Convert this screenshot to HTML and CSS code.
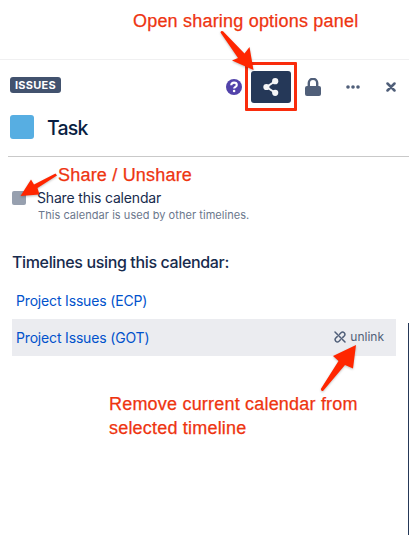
FILE: index.html
```
<!DOCTYPE html>
<html lang="en">
<head>
<meta charset="utf-8">
<title>Task calendar</title>
<link rel="stylesheet" href="styles.css">
</head>
<body>
<main class="panel">
  <header class="toolbar">
    <span class="badge">ISSUES</span>
    <div class="actions">
      <svg class="help" width="16" height="16" viewBox="0 0 16 16"><circle cx="8" cy="8" r="8" fill="#5243aa"/><path d="M5.2 6.2C5.2 4.5 6.4 3.6 8 3.6s2.8.9 2.8 2.4c0 1.8-2.7 1.8-2.7 3.6" fill="none" stroke="#fff" stroke-width="2.1"/><circle cx="8.1" cy="12" r="1.3" fill="#fff"/></svg>
      <button class="share" aria-label="Share"><svg width="18" height="20" viewBox="0 0 18 20"><path d="M13.5 4 4.5 10l9 6" fill="none" stroke="#f4f5f7" stroke-width="2"/><circle cx="13.2" cy="4.2" r="3.1" fill="#f4f5f7"/><circle cx="4.4" cy="10" r="3.1" fill="#f4f5f7"/><circle cx="13.2" cy="15.8" r="3.1" fill="#f4f5f7"/></svg></button>
      <svg class="lock" width="16" height="18" viewBox="0 0 16 18"><path d="M3.8 9V5a4.2 4.2 0 0 1 8.4 0v4" fill="none" stroke="#505f79" stroke-width="2.4"/><rect y="8" width="16" height="10" rx="2" fill="#505f79"/></svg>
      <svg class="more" width="14" height="4" viewBox="0 0 14 4" fill="#505f79"><circle cx="2" cy="2" r="1.8"/><circle cx="7" cy="2" r="1.8"/><circle cx="12" cy="2" r="1.8"/></svg>
      <svg class="close" width="10" height="10" viewBox="0 0 10 10"><path d="m1.5 1.5 7 7m0-7-7 7" stroke="#505f79" stroke-width="2.5" stroke-linecap="round"/></svg>
    </div>
  </header>
  <div class="heading"><span class="swatch"></span><h1>Task</h1></div>
  <section class="sharing">
    <span class="checkbox"></span>
    <div><div class="label">Share this calendar</div><div class="hint">This calendar is used by other timelines.</div></div>
  </section>
  <h2><span>Timelines using this calendar:</span></h2>
  <div class="row"><a>Project Issues (ECP)</a></div>
  <div class="row active"><a>Project Issues (GOT)</a>
    <span class="unlink"><svg width="12" height="12" viewBox="0 0 12 12" fill="none" stroke="#505f79" stroke-width="1.5" stroke-linecap="round"><path d="M1 1 11 11"/><path d="M5.6 3.2 7 1.8c2.2-2 5.2 1 3.2 3.2L8.8 6.4M6.4 8.8 5 10.2c-2.2 2-5.2-1-3.2-3.2l1.4-1.4"/></svg><span class="unlink-text">unlink</span></span>
  </div>
</main>
<div class="backdrop-edge"></div>
<div class="outline"></div>
<div class="note note-open"><span>Open sharing options panel</span></div>
<div class="note note-share"><span>Share / Unshare</span></div>
<div class="note note-remove"><span class="line-a">Remove current calendar from</span><br><span class="line-b">selected timeline</span></div>
<svg class="arrows" width="409" height="535" viewBox="0 0 409 535" fill="#ff2600">
  <path d="M220.5 32.5Q221 30.5 223 31.3L244.5 53.5 249.5 47 253.5 70 232 60.5 238 58Z"/>
  <path d="M55.5 173.5 57 175.5 37.5 188 39.5 194.5 20.5 196 31 179.5 34 184.5Z"/>
  <path d="M356 345 353 368.5 345 365 323 391Q321 391.5 320.8 389L338.5 361 333 356Z"/>
</svg>
</body>
</html>
```
FILE: styles.css
```
* { box-sizing: border-box; }
body { margin: 0; width: 409px; height: 535px; overflow: hidden; position: relative; background: #fff; font-family: Inter, "Liberation Sans", sans-serif; color: #172b4d; }
.panel { margin-top: 59px; height: 476px; border-top: 1px solid #f0f0f1; padding: 11px 13px 0 8px; }
.toolbar { display: flex; align-items: center; justify-content: space-between; height: 32px; padding-left: 2px; }
.badge { display: flex; align-items: center; justify-content: center; width: 51px; height: 16px; margin-top: -4px; border-radius: 3px; background: #42526e; color: #fff; font-size: 11px; font-weight: 700; letter-spacing: .25px; }
.actions { display: flex; align-items: center; }
.share { display: flex; align-items: center; justify-content: center; width: 40px; height: 32px; margin: 0 14px 0 9px; padding: 0; border: 0; border-radius: 3px; background: #253858; }
.more { margin: 0 26px 0 25px; }
.heading { display: flex; align-items: center; height: 54px; margin-right: -13px; border-bottom: 1px solid #c9c9c9; padding: 0 0 5px 2px; }
.swatch { width: 24px; height: 24px; border-radius: 3px; background: #57aee2; }
h1 { margin: 1px 0 0 13px; font-size: 19.5px; font-weight: 500; line-height: 24px; letter-spacing: -.8px; color: #091e42; }
.sharing { display: flex; height: 95px; padding: 34px 0 0 4px; }
.checkbox { width: 14px; height: 14px; margin: 0 11px 0 0; border-radius: 2px; background: #97a0af; }
.label { margin-top: -2px; font-size: 14px; line-height: 18px; letter-spacing: -.17px; }
.hint { margin-left: 1px; padding-top: 1px; font-size: 11px; line-height: 15px; color: #6b778c; letter-spacing: .05px; }
h2 { margin: 0 0 10px 4px; font-size: 16px; font-weight: 500; line-height: 20px; letter-spacing: -.36px; }
.row { display: flex; align-items: center; justify-content: space-between; height: 37px; margin-left: 4px; padding: 0 12px 0 4px; font-size: 14px; letter-spacing: -.17px; color: #0052cc; }
.active { background: #ebecf0; }
.unlink { display: flex; align-items: center; gap: 4px; margin-top: -2px; color: #505f79; font-size: 12px; letter-spacing: 0; }
.backdrop-edge { position: absolute; left: 408px; top: 323px; width: 1px; height: 212px; background: #253858; }
.outline { position: absolute; left: 245px; top: 62px; width: 52px; height: 49px; border: 3px solid #f92c0c; border-radius: 1px; }
.note { position: absolute; color: #ee3410; font-family: "Liberation Sans", sans-serif; font-size: 18px; line-height: 24px; letter-spacing: .2px; white-space: nowrap; -webkit-text-stroke: .25px #ee3410; }
.note-open { left: 133px; top: 9px; }
.note-share { left: 58px; top: 163px; }
.note-remove { left: 109px; top: 392px; }
.arrows { position: absolute; left: 0; top: 0; filter: drop-shadow(0 1px 1px rgba(0,0,0,.25)); }
```
